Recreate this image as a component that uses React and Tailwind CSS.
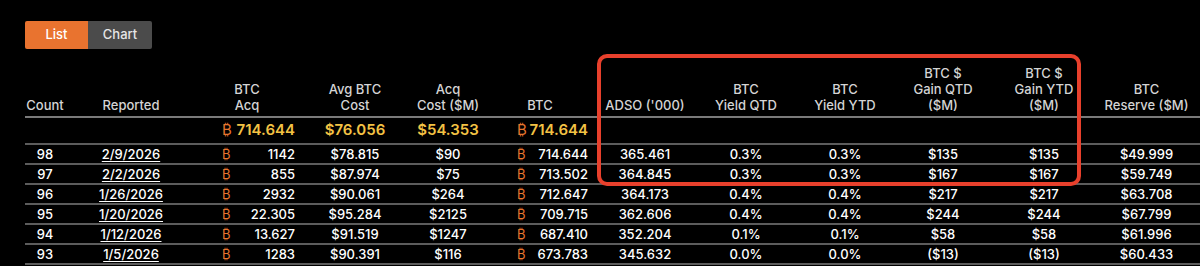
import React from "react";

const COLS =
  "grid grid-cols-[40px_132px_100px_116px_70px_114px_96px_106px_92px_104px_98px_107px]";

const rows = [
  { count: 98, date: "2/9/2026", acq: "1142", avg: "$78.815", cost: "$90", btc: "714.644", adso: "365.461", yq: "0.3%", yy: "0.3%", gq: "$135", gy: "$135", res: "$49.999" },
  { count: 97, date: "2/2/2026", acq: "855", avg: "$87.974", cost: "$75", btc: "713.502", adso: "364.845", yq: "0.3%", yy: "0.3%", gq: "$167", gy: "$167", res: "$59.749" },
  { count: 96, date: "1/26/2026", acq: "2932", avg: "$90.061", cost: "$264", btc: "712.647", adso: "364.173", yq: "0.4%", yy: "0.4%", gq: "$217", gy: "$217", res: "$63.708" },
  { count: 95, date: "1/20/2026", acq: "22.305", avg: "$95.284", cost: "$2125", btc: "709.715", adso: "362.606", yq: "0.4%", yy: "0.4%", gq: "$244", gy: "$244", res: "$67.799" },
  { count: 94, date: "1/12/2026", acq: "13.627", avg: "$91.519", cost: "$1247", btc: "687.410", adso: "352.204", yq: "0.1%", yy: "0.1%", gq: "$58", gy: "$58", res: "$61.996" },
  { count: 93, date: "1/5/2026", acq: "1283", avg: "$90.391", cost: "$116", btc: "673.783", adso: "345.632", yq: "0.0%", yy: "0.0%", gq: "($13)", gy: "($13)", res: "$60.433" },
];

const headers = [
  ["Count"],
  ["Reported"],
  ["BTC", "Acq"],
  ["Avg BTC", "Cost"],
  ["Acq", "Cost ($M)"],
  ["BTC"],
  ["ADSO ('000)"],
  ["BTC", "Yield QTD"],
  ["BTC", "Yield YTD"],
  ["BTC $", "Gain QTD", "($M)"],
  ["BTC $", "Gain YTD", "($M)"],
  ["BTC", "Reserve ($M)"],
];

const Btc = ({ big }) => (
  <span className={big ? "text-[#e8762f] font-normal" : "text-[#e8762f] font-normal"}>₿</span>
);

export default function App() {
  return (
    <div
      className="relative h-[266px] w-[1200px] overflow-hidden bg-black pl-[25px] pt-[21px] text-white"
      style={{ fontFamily: "Inter, 'Noto Sans', 'DejaVu Sans', sans-serif" }}
    >
      {/* Toggle */}
      <div className="flex h-[28px] w-[127px] overflow-hidden rounded-[2px] text-[13px] font-medium">
        <button className="w-[63px] bg-[#e9732f] text-white">List</button>
        <button className="w-[64px] bg-[#4b4b4b] text-[#e6e6e6]">Chart</button>
      </div>

      {/* Table */}
      <div className="mt-[7px] w-[1175px] text-[13px] font-medium">
        {/* header */}
        <div className={`${COLS} h-[62px] items-end border-b-2 border-[#7a7a7a] pb-[3px] text-[#d4d4d4]`}>
          {headers.map((h, i) => (
            <div key={i} className="text-center leading-[16px]">
              {h.map((l) => (
                <div key={l}>{l}</div>
              ))}
            </div>
          ))}
        </div>

        {/* totals */}
        <div className={`${COLS} h-[27px] items-center border-b-2 border-[#5c5c5c] text-[15px] font-semibold text-[#f3c244]`}>
          <div />
          <div />
          <div className="flex justify-between pl-[25px] pr-[2px]">
            <Btc big />
            <span>714.644</span>
          </div>
          <div className="text-center">$76.056</div>
          <div className="text-center">$54.353</div>
          <div className="flex justify-between pl-[34px] pr-[9px]">
            <Btc big />
            <span>714.644</span>
          </div>
          <div />
          <div />
          <div />
          <div />
          <div />
          <div />
        </div>

        {/* rows */}
        {rows.map((r) => (
          <div
            key={r.count}
            className={`${COLS} h-[20px] items-center border-b-2 border-[#5c5c5c] leading-[18px]`}
          >
            <div className="text-center">{r.count}</div>
            <div className="text-center">
              <span className="underline underline-offset-2">{r.date}</span>
            </div>
            <div className="flex justify-between pl-[25px] pr-[2px]">
              <Btc />
              <span>{r.acq}</span>
            </div>
            <div className="text-center">{r.avg}</div>
            <div className="text-center">{r.cost}</div>
            <div className="flex justify-between pl-[34px] pr-[9px]">
              <Btc />
              <span>{r.btc}</span>
            </div>
            <div className="text-center">{r.adso}</div>
            <div className="text-center">{r.yq}</div>
            <div className="text-center">{r.yy}</div>
            <div className="text-center">{r.gq}</div>
            <div className="text-center">{r.gy}</div>
            <div className="text-center">{r.res}</div>
          </div>
        ))}
      </div>

      {/* highlight box */}
      <div className="pointer-events-none absolute left-[597px] top-[54px] h-[132px] w-[484px] rounded-[10px] border-4 border-[#e8402c]" />
    </div>
  );
}
